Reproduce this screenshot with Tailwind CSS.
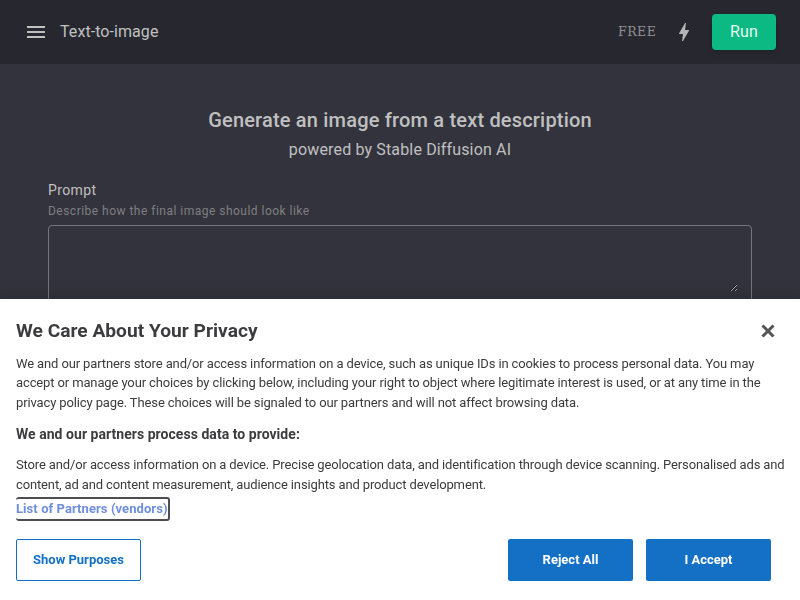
<!DOCTYPE html>
<html lang="en">
<head>
  <meta charset="UTF-8" />
  <meta name="viewport" content="width=device-width, initial-scale=1.0"/>
  <title>Text-to-image</title>
  <script src="https://cdn.jsdelivr.net/npm/@tailwindcss/browser@4"></script>
</head>
<body class="h-screen overflow-hidden bg-[#33333d] font-['Roboto',sans-serif] text-[#c0c0c0]">

  <!-- Top bar -->
  <header class="flex h-16 items-center bg-[#27272f] px-6">
    <button aria-label="menu">
      <svg class="size-6 fill-current" viewBox="0 0 24 24"><path d="M3 18h18v-2H3v2zm0-5h18v-2H3v2zm0-7v2h18V6H3z"/></svg>
    </button>
    <h1 class="ml-3 text-base tracking-[0.07px]">Text-to-image</h1>
    <div class="ml-auto flex items-center">
      <span class="w-[42px] font-['DejaVu_Serif',serif] text-[12.5px] tracking-[0.5px] text-[#909091]">FREE</span>
      <svg class="ml-3 size-6 fill-[#b4b4b4]" viewBox="0 0 24 24"><path d="M11 21h-1l1-7H7.500c-.88 0-.33-.75-.31-.78C8.480 10.940 10.420 7.540 13.010 3h1l-1 7h3.510c.4 0 .62.190.4.660C12.970 17.550 11 21 11 21z"/></svg>
      <button class="ml-4 h-9 w-16 rounded bg-[#0cb983] text-base tracking-[0.15px] text-white/90 shadow-md">Run</button>
    </div>
  </header>

  <main class="px-12 pt-10">
    <h2 class="text-center text-xl leading-8 font-medium tracking-[0.185px]">Generate an image from a text description</h2>
    <p class="text-center text-base leading-7 tracking-[0.15px]">powered by Stable Diffusion AI</p>

    <label class="mt-[15px] block text-sm leading-[22px] tracking-[0.4px]">Prompt</label>
    <p class="text-xs leading-5 tracking-[0.48px] text-[#7f7f80]">Describe how the final image should look like</p>
    <div class="mt-1 h-[120px] rounded border border-[#76757d] pt-4 pr-[13px] pl-3.5">
      <textarea class="block h-[50px] w-full resize outline-none"></textarea>
    </div>
  </main>

  <!-- Cookie consent -->
  <section class="fixed inset-x-0 bottom-0 h-[301px] bg-white pt-[18px] pl-4 text-[#3c3c3e] shadow-[0_0_18px_rgba(0,0,0,0.2)]">
    <div class="flex items-center justify-between pr-[25px]">
      <h2 class="text-[19.2px] leading-7 font-bold">We Care About Your Privacy</h2>
      <button aria-label="Close">
        <svg class="size-3.5 stroke-[#565656] stroke-3" viewBox="0 0 14 14"><path d="M1.500 1.500l11 11M12.500 1.500l-11 11"/></svg>
      </button>
    </div>
    <p class="mt-[8.7px] pr-3 text-[13px] leading-[19.5px] tracking-[-0.125px]">We and our partners store and/or access information on a device, such as unique IDs in cookies to process personal data. You may accept or manage your choices by clicking below, including your right to object where legitimate interest is used, or at any time in the privacy policy page. These choices will be signaled to our partners and will not affect browsing data.</p>
    <h3 class="mt-[11.8px] text-sm leading-5 font-bold tracking-[0.04px]">We and our partners process data to provide:</h3>
    <p class="mt-[11px] pr-3 text-[13px] leading-[20px] tracking-[-0.135px]">Store and/or access information on a device. Precise geolocation data, and identification through device scanning. Personalised ads and content, ad and content measurement, audience insights and product development.</p>
    <div class="mt-[2px] w-fit rounded-[3px] border-2 border-l-0 border-[#4c4d50]">
      <button class="block h-5 text-[13px] leading-[18px] font-bold tracking-[0.07px] text-[#6f8fdb]">List of Partners (vendors)</button>
    </div>
    <div class="mt-[18px] flex pr-[29px] text-[13px] font-bold">
      <button class="h-[42px] w-[125px] rounded-xs border border-[#1370c4] text-[#1370c4]">Show Purposes</button>
      <button class="ml-auto h-[42px] w-[125px] rounded-xs bg-[#1370c4] text-white">Reject All</button>
      <button class="ml-[13px] h-[42px] w-[125px] rounded-xs bg-[#1370c4] text-white">I Accept</button>
    </div>
  </section>
</body>
</html>
